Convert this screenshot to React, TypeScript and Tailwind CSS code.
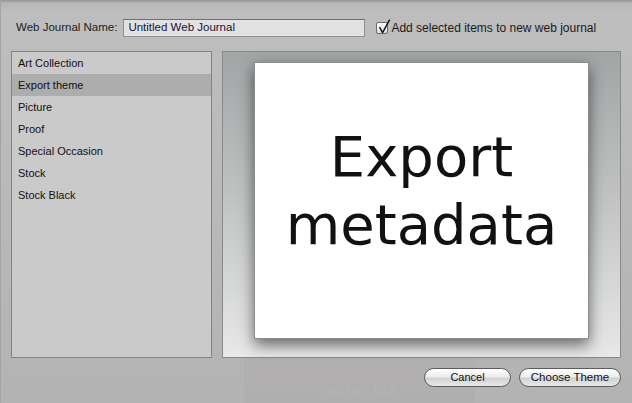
import React from "react";

const items = ["Art Collection", "Export theme", "Picture", "Proof", "Special Occasion", "Stock", "Stock Black"];

export default function App() {
  const sans = { fontFamily: '"Liberation Sans", Arial, sans-serif' } as React.CSSProperties;
  return (
    <div
      className="relative w-[632px] h-[403px] overflow-hidden flex flex-col border-l border-[#a4a4a4] bg-[linear-gradient(to_bottom,#939393_0px,#b6b6b6_3px,#bebebe_12px,#b9b9b9_200px,#b3b3b3_100%)]"
      style={sans}
    >
      {/* faint background bleed */}
      <div className="absolute left-[242px] top-[358px] w-[232px] h-[50px] bg-[rgba(0,0,0,0.02)] border-l border-[rgba(255,255,255,0.05)]" />
      <div className="absolute left-[246px] top-[362px] w-[226px] h-[22px] rounded-[3px] border border-[rgba(255,255,255,0.035)] bg-[rgba(190,150,150,0.05)]" />
      <div className="absolute left-[323px] top-[384px] text-[10px] text-[rgba(255,255,255,0.1)] tracking-[0.5px]">ISO 100&nbsp;&nbsp;&nbsp;f/2.8</div>

      {/* header */}
      <div className="relative flex items-center h-[18px] mt-[19px] pl-[15px]">
        <span className="text-[11.5px] text-[#1c1c1c] leading-none">Web Journal Name:</span>
        <div className="ml-[6px] w-[242px] h-[18px] border border-[#8f8f8f] border-t-[#6f6f6f] bg-[#e2e2e2] flex items-center pl-[4px]">
          <span className="text-[11.5px] text-[#141438] leading-none">Untitled Web Journal</span>
        </div>
        <div className="relative ml-[11px] w-[12px] h-[12px] border border-[#6a6a6a] rounded-[2px] bg-[linear-gradient(to_bottom,#ffffff,#dcdcdc)]">
          <svg className="absolute left-[-1px] top-[-4px]" width="16" height="16" viewBox="0 0 16 16">
            <path d="M3.8 8.6 L6.6 13.6 L13.4 1.2" fill="none" stroke="#1a1a1a" strokeWidth="1.5" strokeLinecap="round" strokeLinejoin="round" />
          </svg>
        </div>
        <span className="ml-[3px] text-[12px] text-[#1a1a1a] leading-none">Add selected items to new web journal</span>
      </div>

      {/* panels */}
      <div className="relative flex mt-[14px] pl-[10px] gap-[10px]">
        <div className="w-[201px] h-[307px] border border-[#838383] bg-[#cacaca] flex flex-col">
          {items.map((it, i) => (
            <div
              key={it}
              className={`h-[22px] pl-[6px] text-[11px] leading-[22px] text-[#111] ${i === 1 ? "bg-[#adadad]" : ""}`}
            >
              {it}
            </div>
          ))}
        </div>
        <div className="w-[399px] h-[307px] border border-[#8a8a8a] bg-[linear-gradient(to_bottom,#a1a5a5,#bfc1c1_45%,#e8e8e8)] flex justify-center pt-[10px]">
          <div className="w-[335px] h-[277px] bg-white border border-[#8c8c8c] shadow-[0_6px_14px_rgba(0,0,0,0.55)] flex flex-col items-center pt-[60px]">
            <div
              className="text-[56px] leading-[68px] text-[#111] text-center"
              style={{ fontFamily: '"DejaVu Sans", sans-serif' }}
            >
              <div>Export</div>
              <div>metadata</div>
            </div>
          </div>
        </div>
      </div>

      {/* buttons */}
      <div className="relative flex justify-end gap-[8px] mt-[10px] pr-[11px]">
        <button className="w-[87px] h-[19px] rounded-full border border-[#5c5c5c] bg-[linear-gradient(to_bottom,#ffffff,#ececec_45%,#d2d2d2_55%,#e8e8e8)] text-[11px] text-[#111] leading-none flex items-center justify-center">
          Cancel
        </button>
        <button className="w-[102px] h-[19px] rounded-full border border-[#5c5c5c] bg-[linear-gradient(to_bottom,#ffffff,#ececec_45%,#d2d2d2_55%,#e8e8e8)] text-[11.5px] text-[#111] leading-none flex items-center justify-center">
          Choose Theme
        </button>
      </div>
    </div>
  );
}
